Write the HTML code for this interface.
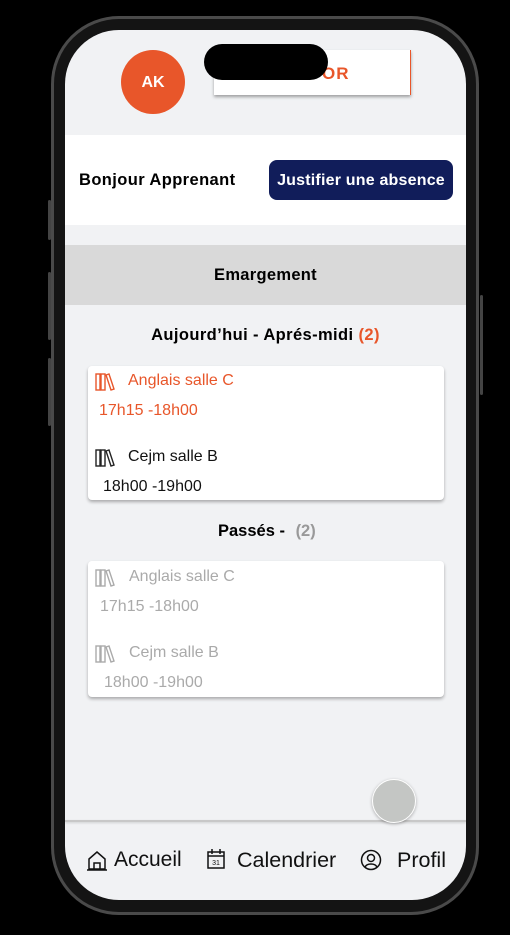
<!DOCTYPE html>
<html><head><meta charset="utf-8"><style>
*{margin:0;padding:0;box-sizing:border-box}
body{width:510px;height:935px;background:#000;position:relative;overflow:hidden;font-family:"Liberation Sans",sans-serif}
.phone{position:absolute;left:51px;top:16px;width:428px;height:899px;border-radius:68px;background:#141414;border:3px solid #4a4a4a}
.btn{position:absolute;background:#444;width:3px;border-radius:2px}
.screen{position:absolute;left:65px;top:30px;width:401px;height:870px;border-radius:54px;background:#f1f2f4;overflow:hidden}
.abs{position:absolute}
.card{position:absolute;left:23px;width:356px;background:#fff;border-radius:4px;box-shadow:0 2px 3px rgba(0,0,0,.3)}
.t{position:absolute;font-size:16px;white-space:nowrap}
</style></head><body>
<div class="phone"></div>
<div class="btn" style="left:48px;top:200px;height:40px"></div>
<div class="btn" style="left:48px;top:272px;height:68px"></div>
<div class="btn" style="left:48px;top:358px;height:68px"></div>
<div class="btn" style="left:480px;top:295px;height:100px"></div>
<div class="screen">
 <div class="abs" style="left:56px;top:20px;width:64px;height:64px;border-radius:50%;background:#e8562a;color:#fff;font-weight:bold;font-size:16px;text-align:center;line-height:66px">AK</div>
 <div class="abs" style="left:149px;top:20px;width:197px;height:45px;background:#fff;box-shadow:0 2px 3px rgba(0,0,0,.35);border-right:1px solid #e8562a">
  <div class="abs" style="left:108px;top:14px;color:#e8562a;font-weight:bold;font-size:17px;letter-spacing:1px">OR</div>
 </div>
 <div class="abs" style="left:139px;top:14px;width:124px;height:36px;border-radius:18px;background:#000"></div>
 <div class="abs" style="left:0;top:105px;width:401px;height:90px;background:#fff"></div>
 <div class="t" style="left:14px;top:141px;font-weight:bold;color:#000;font-size:16.5px;letter-spacing:.4px">Bonjour Apprenant</div>
 <div class="abs" style="left:204px;top:130px;width:184px;height:40px;border-radius:8px;background:#111d5a;color:#fff;font-weight:bold;font-size:16px;line-height:42px;text-align:center;letter-spacing:.2px">Justifier une absence</div>
 <div class="abs" style="left:0;top:215px;width:401px;height:60px;background:#d9d9d9;text-align:center;line-height:61px;font-weight:bold;font-size:16.5px;letter-spacing:.3px">Emargement</div>
 <div class="t" style="left:0;width:401px;text-align:center;top:296px;font-weight:bold;font-size:16.5px;letter-spacing:.4px">Aujourd’hui - Aprés-midi <span style="color:#e8562a">(2)</span></div>
 <div class="card" style="top:336px;height:134px">
  <svg class="abs" style="left:7px;top:7px" width="20" height="18" viewBox="0 0 20 18" fill="none" stroke="#e8562a" stroke-width="1.4"><rect x="1" y="1" width="4" height="16"/><rect x="6" y="1" width="4" height="16"/><path d="M11 2l3-1 5 15-3 1z"/></svg>
  <div class="t" style="left:40px;top:6px;color:#e8562a">Anglais salle C</div>
  <div class="t" style="left:11px;top:36px;color:#e8562a">17h15 -18h00</div>
  <svg class="abs" style="left:7px;top:83px" width="20" height="18" viewBox="0 0 20 18" fill="none" stroke="#222" stroke-width="1.4"><rect x="1" y="1" width="4" height="16"/><rect x="6" y="1" width="4" height="16"/><path d="M11 2l3-1 5 15-3 1z"/></svg>
  <div class="t" style="left:40px;top:82px;color:#111">Cejm salle B</div>
  <div class="t" style="left:15px;top:112px;color:#111">18h00 -19h00</div>
 </div>
 <div class="t" style="left:153px;top:492px;font-weight:bold;font-size:16.5px">Passés - <span style="color:#999;margin-left:6px">(2)</span></div>
 <div class="card" style="top:531px;height:136px">
  <svg class="abs" style="left:7px;top:8px" width="20" height="18" viewBox="0 0 20 18" fill="none" stroke="#aaa" stroke-width="1.4"><rect x="1" y="1" width="4" height="16"/><rect x="6" y="1" width="4" height="16"/><path d="M11 2l3-1 5 15-3 1z"/></svg>
  <div class="t" style="left:41px;top:7px;color:#aaa">Anglais salle C</div>
  <div class="t" style="left:12px;top:37px;color:#aaa">17h15 -18h00</div>
  <svg class="abs" style="left:7px;top:84px" width="20" height="18" viewBox="0 0 20 18" fill="none" stroke="#aaa" stroke-width="1.4"><rect x="1" y="1" width="4" height="16"/><rect x="6" y="1" width="4" height="16"/><path d="M11 2l3-1 5 15-3 1z"/></svg>
  <div class="t" style="left:41px;top:83px;color:#aaa">Cejm salle B</div>
  <div class="t" style="left:16px;top:113px;color:#aaa">18h00 -19h00</div>
 </div>
 <div class="abs" style="left:0;top:790px;width:401px;height:2px;background:#c8c8c8;box-shadow:0 1px 2px rgba(0,0,0,.15)"></div>
 <div class="abs" style="left:307px;top:749px;width:44px;height:44px;border-radius:50%;background:#c4c6c4;border:1px solid #fff;box-shadow:0 1px 3px rgba(0,0,0,.3)"></div>
 <svg class="abs" style="left:21px;top:819px" width="22" height="22" viewBox="0 0 22 22" fill="none" stroke="#111" stroke-width="1.5"><path d="M3 10L11 3l8 7v10H3z"/><path d="M8 20v-6h6v6"/><path d="M1 21h20"/></svg>
 <div class="t" style="left:49px;top:818px;font-size:21px;color:#111">Accueil</div>
 <svg class="abs" style="left:141px;top:818px" width="20" height="22" viewBox="0 0 20 22" fill="none" stroke="#111" stroke-width="1.5"><rect x="2" y="4" width="16" height="16"/><path d="M2 8h16M6 1v5M14 1v5"/><text x="10" y="17" font-size="7" text-anchor="middle" fill="#111" stroke="none" font-family="Liberation Sans">31</text></svg>
 <div class="t" style="left:172px;top:818px;font-size:21.5px;color:#111">Calendrier</div>
 <svg class="abs" style="left:295px;top:819px" width="22" height="22" viewBox="0 0 22 22" fill="none" stroke="#111" stroke-width="1.5"><circle cx="11" cy="11" r="9.5"/><circle cx="11" cy="9" r="3.5"/><path d="M5 18c2-4 10-4 12 0"/></svg>
 <div class="t" style="left:332px;top:818px;font-size:21.5px;color:#111">Profil</div>
</div>
</body></html>
